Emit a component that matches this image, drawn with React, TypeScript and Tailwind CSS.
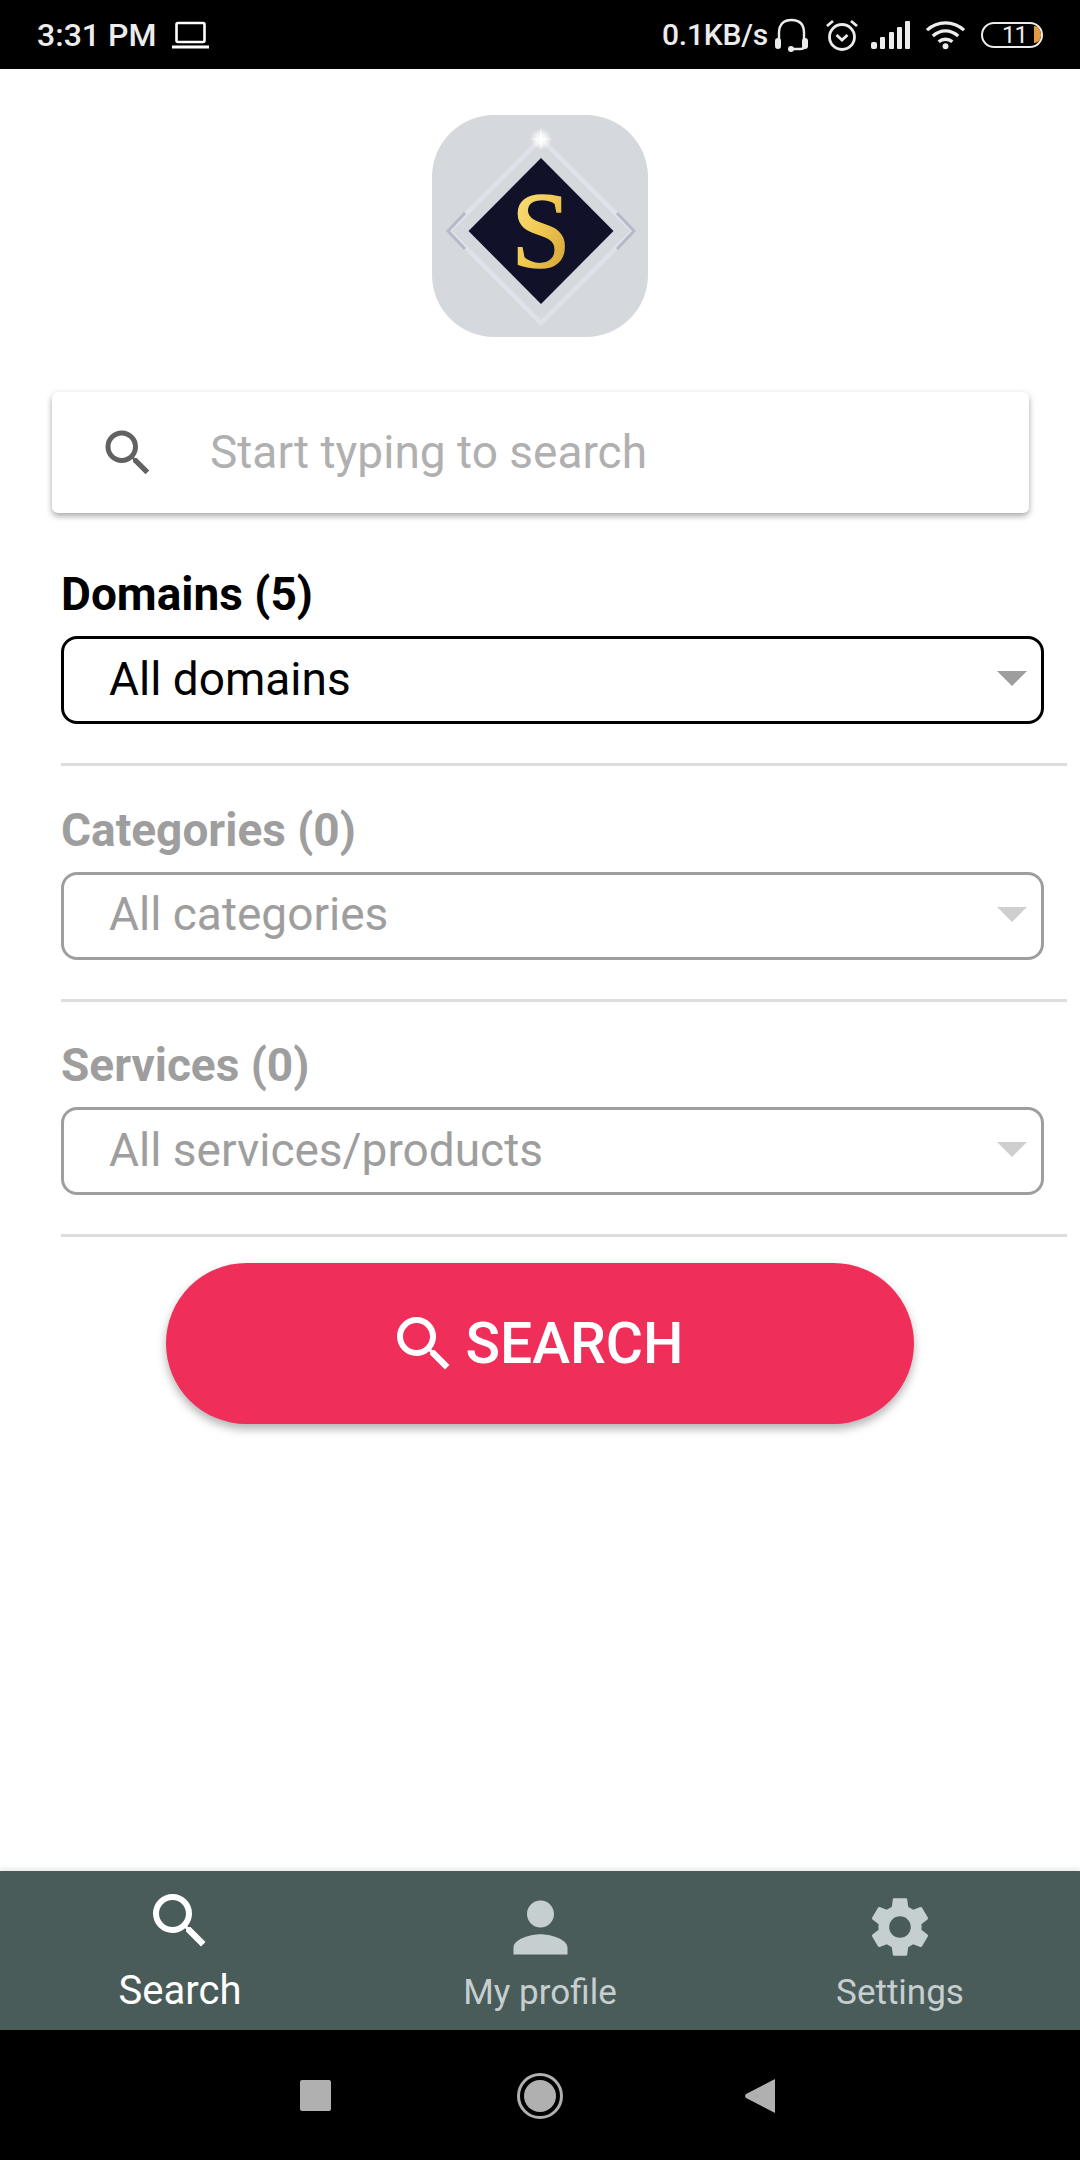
import React from "react";

const SEARCH = "M15.5 14h-.79l-.28-.27A6.471 6.471 0 0 0 16 9.5 6.5 6.5 0 1 0 9.5 16c1.61 0 3.09-.59 4.23-1.57l.27.28v.79l5 4.99L20.49 19l-4.99-5zm-6 0C7.01 14 5 11.99 5 9.5S7.01 5 9.5 5 14 7.01 14 9.5 11.99 14 9.5 14z";
const PERSON = "M12 12c2.21 0 4-1.79 4-4s-1.79-4-4-4-4 1.79-4 4 1.79 4 4 4zm0 2c-2.67 0-8 1.34-8 4v2h16v-2c0-2.66-5.33-4-8-4z";
const GEAR = "M19.14 12.94c.04-.3.06-.61.06-.94 0-.32-.02-.64-.07-.94l2.03-1.58c.18-.14.23-.41.12-.61l-1.92-3.32c-.12-.22-.37-.29-.59-.22l-2.39.96c-.5-.38-1.03-.7-1.62-.94l-.36-2.54c-.04-.24-.24-.41-.48-.41h-3.84c-.24 0-.43.17-.47.41l-.36 2.54c-.59.24-1.13.57-1.62.94l-2.39-.96c-.22-.08-.47 0-.59.22L2.74 8.87c-.12.21-.08.47.12.61l2.03 1.58c-.05.3-.09.63-.09.94s.02.64.07.94l-2.03 1.58c-.18.14-.23.41-.12.61l1.92 3.32c.12.22.37.29.59.22l2.39-.96c.5.38 1.03.7 1.62.94l.36 2.54c.05.24.24.41.48.41h3.84c.24 0 .44-.17.47-.41l.36-2.54c.59-.24 1.13-.56 1.62-.94l2.39.96c.22.08.47 0 .59-.22l1.92-3.32c.12-.22.07-.47-.12-.61l-2.01-1.58zM12 15.6c-1.98 0-3.6-1.62-3.6-3.6s1.62-3.6 3.6-3.6 3.6 1.62 3.6 3.6-1.62 3.6-3.6 3.6z";

function Mat({ d, size, color }: { d: string; size: number; color: string }) {
  return (
    <svg width={size} height={size} viewBox="0 0 24 24" fill={color} className="block shrink-0">
      <path d={d} />
    </svg>
  );
}

function StatusBar() {
  return (
    <div className="h-[69px] bg-black flex items-center justify-between pl-[37px] pr-[37px] text-[#ececec] shrink-0">
      <div className="flex items-center">
        <span className="text-[32px] font-medium leading-none">3:31 PM</span>
        <svg width="38" height="28" viewBox="0 0 38 28" className="ml-[16px]" fill="none" stroke="#fff" strokeWidth="2.6">
          <rect x="4.5" y="2" width="28" height="19" rx="1.5" />
          <path d="M0 26h37" strokeWidth="3" />
        </svg>
      </div>
      <div className="flex items-center">
        <span className="text-[30px] font-medium leading-none tracking-[-0.2px]">0.1KB/s</span>
        <svg width="36" height="34" viewBox="0 0 36 34" className="ml-[6px]" fill="none" stroke="#ececec" strokeWidth="2.4">
          <path d="M5 23V15C5 6 10 2 17.500 2S30 6 30 15v8" />
          <rect x="1" y="20" width="6" height="11" rx="3" fill="#ececec" stroke="none" />
          <rect x="28" y="20" width="6" height="11" rx="3" fill="#ececec" stroke="none" />
          <path d="M30 29c0 1.500-2 2-4 2h-7" />
          <circle cx="17" cy="31" r="3" fill="#ececec" stroke="none" />
        </svg>
        <svg width="34" height="32" viewBox="0 0 34 32" className="ml-[15px]" fill="none" stroke="#ececec" strokeWidth="2.8">
          <circle cx="17" cy="18" r="12.500" />
          <path d="M11.500 16l5.500 5 5.500-5" />
          <path d="M2 7l6-5M32 7l-6-5" />
        </svg>
        <svg width="40" height="28" viewBox="0 0 40 28" className="ml-[12px]" fill="#ececec">
          <rect x="0" y="21" width="6" height="7" rx="2" />
          <rect x="9" y="16" width="5" height="12" rx="1" />
          <rect x="18" y="11" width="5" height="17" rx="1" />
          <rect x="26" y="6" width="5" height="22" rx="1" />
          <rect x="34" y="0" width="5" height="28" rx="1" />
        </svg>
        <svg width="41" height="30" viewBox="0 0 42 30" className="ml-[14px]" fill="none" stroke="#ececec" strokeWidth="3.400">
          <path d="M2 10c11-10 27-10 38 0" />
          <path d="M8 16c8-7 18-7 26 0" />
          <path d="M14 22c4-3.500 10-3.500 14 0" />
          <circle cx="21" cy="26.500" r="3" fill="#ececec" stroke="none" />
        </svg>
        <div className="ml-[15px] relative w-[62px] h-[26px] rounded-full border-[2.5px] border-[#ececec] flex items-center overflow-hidden">
          <span className="ml-[19px] text-[24px] leading-none font-normal tracking-[-1px]">11</span>
          <div className="ml-[7px] w-[8px] h-[17px] rounded-r-full bg-[#e49b3f]" />
        </div>
      </div>
    </div>
  );
}

function Logo() {
  return (
    <div className="mx-auto mt-[46px] w-[216px] h-[222px] rounded-[62px] bg-[#d5d8dc] overflow-hidden">
      <svg width="216" height="222" viewBox="0 0 216 222" className="block">
        <defs>
          <linearGradient id="gold" x1="0" y1="0" x2="1" y2="1">
            <stop offset="0" stopColor="#fbe68a" />
            <stop offset="0.5" stopColor="#f0c850" />
            <stop offset="1" stopColor="#c8962e" />
          </linearGradient>
          <radialGradient id="spark">
            <stop offset="0" stopColor="#ffffff" />
            <stop offset="0.45" stopColor="#ffffff" stopOpacity="0.7" />
            <stop offset="1" stopColor="#ffffff" stopOpacity="0" />
          </radialGradient>
        </defs>
        <path d="M109 24L201 116 109 208 17 116Z" fill="none" stroke="#dfe2ea" strokeWidth="4.500" />
        <path d="M33 98L16 116 33 134" fill="none" stroke="#b4bac8" strokeWidth="3" />
        <path d="M185 98L202 116 185 134" fill="none" stroke="#b4bac8" strokeWidth="3" />
        <path d="M109 43L181.500 116 109 189 36.500 116Z" fill="#11112a" />
        <circle cx="109" cy="24" r="11" fill="url(#spark)" />
        <path d="M109 12L110 23 120 24 110 25 109 36 108 25 98 24 108 23Z" fill="#fff" />
        <text x="109" y="152" textAnchor="middle" fontFamily="'Liberation Serif', serif" fontSize="107" fill="url(#gold)" stroke="url(#gold)" strokeWidth="1.5">S</text>
      </svg>
    </div>
  );
}

function Filter({ label, value, active }: { label: string; value: string; active?: boolean }) {
  return (
    <div className="flex flex-col">
      <div className={`h-[52px] flex items-center pl-[61px] text-[46px] font-bold leading-none ${active ? "text-black" : "text-[#9e9e9e]"}`}>
        {label}
      </div>
      <div className={`ml-[61px] mr-[36px] mt-[16px] h-[88px] rounded-[16px] border-[3px] flex items-center justify-between pl-[45px] pr-[14px] ${active ? "border-black" : "border-[#9e9e9e]"}`}>
        <span className={`text-[46px] leading-none -mt-[3px] ${active ? "text-black" : "text-[#9e9e9e]"}`}>{value}</span>
        <div className={`w-0 h-0 border-l-[15px] border-r-[15px] border-t-[15px] border-l-transparent border-r-transparent -mt-[3px] ${active ? "border-t-[#9e9e9e]" : "border-t-[#cfcfcf]"}`} />
      </div>
      <div className="ml-[61px] mr-[13px] mt-[39px] h-[3px] bg-[#dddddd]" />
    </div>
  );
}

function NavItem({ d, label, active, size }: { d: string; label: string; active?: boolean; size: number }) {
  const color = active ? "#ffffff" : "#c6cfcf";
  return (
    <div className="flex-1 relative flex flex-col items-center">
      <div className={`h-[82px] flex items-center justify-center ${active ? "mt-[9px]" : "mt-[15px]"}`}>
        <Mat d={d} size={size} color={color} />
      </div>
      <span className={`leading-none ${active ? "text-[40px] text-white mt-[9px]" : "text-[35px] text-[#c6cfcf] mt-[7px]"}`}>{label}</span>
    </div>
  );
}

export default function App() {
  return (
    <div className="w-[1080px] h-[2160px] flex flex-col bg-white overflow-hidden font-['Roboto',sans-serif]">
      <StatusBar />
      <main className="flex-1 flex flex-col">
        <Logo />
        <div className="ml-[52px] w-[977px] h-[121px] mt-[55px] bg-white rounded-[6px] shadow-[0_3px_6px_rgba(0,0,0,0.35)] flex items-center pl-[46px]">
          <Mat d={SEARCH} size={60} color="#616161" />
          <span className="ml-[52px] text-[46px] leading-none text-[#b0b0b0] -mt-[2px]">Start typing to search</span>
        </div>
        <div className="mt-[55px] flex flex-col gap-[37.5px]">
          <Filter label="Domains (5)" value="All domains" active />
          <Filter label="Categories (0)" value="All categories" />
          <Filter label="Services (0)" value="All services/products" />
        </div>
        <button className="mx-auto mt-[26px] w-[748px] h-[161px] rounded-full bg-[#f02e5a] shadow-[0_5px_10px_rgba(0,0,0,0.3)] flex items-center justify-center text-white pr-[8px]">
          <Mat d={SEARCH} size={72} color="#ffffff" />
          <span className="ml-[5px] text-[57px] font-medium leading-none">SEARCH</span>
        </button>
      </main>
      <nav className="h-[159px] shrink-0 bg-[#4a5c5a] flex shadow-[0_-3px_4px_rgba(0,0,0,0.08)]">
        <NavItem d={SEARCH} label="Search" active size={72} />
        <NavItem d={PERSON} label="My profile" size={81} />
        <NavItem d={GEAR} label="Settings" size={72} />
      </nav>
      <div className="h-[130px] shrink-0 bg-black flex items-start justify-center pt-[43px] pr-[6px]">
        <div className="w-[31px] h-[31px] mt-[7px] rounded-[2px] bg-[#b0b0b0]" />
        <svg width="46" height="46" viewBox="0 0 46 46" className="ml-[186px]">
          <circle cx="23" cy="23" r="21.500" fill="none" stroke="#b0b0b0" strokeWidth="3" />
          <circle cx="23" cy="23" r="16" fill="#b0b0b0" />
        </svg>
        <svg width="30" height="34" viewBox="0 0 30 34" className="ml-[182px] mt-[6px]">
          <path d="M30 0V34L1 19Q-1 17 1 15Z" fill="#b0b0b0" />
        </svg>
      </div>
    </div>
  );
}
